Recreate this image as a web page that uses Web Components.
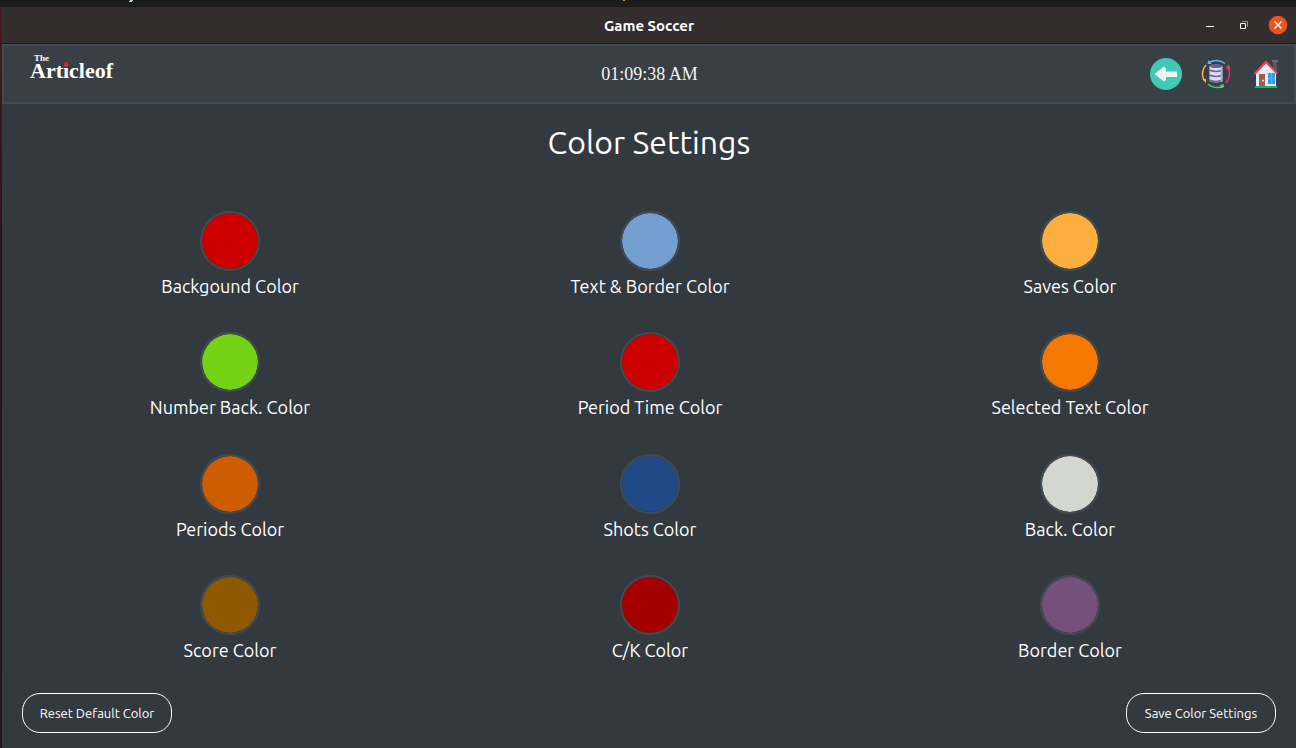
<!DOCTYPE html>
<html lang="en">
<head>
<meta charset="utf-8">
<title>Game Soccer</title>
<style>
  html, body { margin: 0; }
  body { background: #32393f; color: #fff; font-family: Ubuntu, "Noto Sans", sans-serif; }
</style>
</head>
<body>
<app-window></app-window>

<template id="window-tpl">
  <style>
    :host { display: flex; flex-direction: column; min-height: 100vh; box-sizing: border-box; background: #32393f; }
    .desktop { height: 7px; background: #1c1c1c; }
    .desktop svg { display: block; }
    .frame { flex: 1; display: flex; flex-direction: column; border-style: solid; border-image: linear-gradient(#491a1e, #2c141d 30%, #261620) 1; border-width: 0 0 0 2px; }
  </style>
  <div class="desktop">
    <svg width="640" height="3" aria-hidden="true"><path d="M130 0h3l-1 2h-3V1h1z" fill="#c9d6df"/><path d="M623 0h2v1h-2z" fill="#e0a15c"/></svg>
  </div>
  <div class="frame">
    <title-bar>Game Soccer</title-bar>
    <app-header></app-header>
    <color-settings></color-settings>
  </div>
</template>

<template id="titlebar-tpl">
  <style>
    :host { display: grid; grid-template-columns: 1fr auto 1fr; align-items: center; height: 36px; background: #312e2d; border-bottom: 1px solid #1d1c1c; font-size: 15px; line-height: 20px; font-weight: 700; padding-right: 8px; }
    .title { grid-column: 2; padding: 2px 0 0 8px; }
    .controls { display: flex; justify-content: flex-end; gap: 14px; }
    button { width: 20px; height: 20px; padding: 0; border: 0; background: none; color: #fff; }
    svg { display: block; }
  </style>
  <span class="title"><slot></slot></span>
  <div class="controls">
    <button aria-label="Minimize"><svg width="20" height="20"><path d="M6 11.500h8" stroke="#fff"/></svg></button>
    <button aria-label="Restore"><svg width="20" height="20" fill="none"><path d="M8 6.500h5.500V12" stroke="#969493"/><path d="M6.500 8.500h5v5h-5z" stroke="#fff"/></svg></button>
    <button aria-label="Close"><svg width="20" height="20"><circle cx="10" cy="10" r="9.300" fill="#e95420"/><path d="M6.500 6.500l7 7m0-7l-7 7" stroke="#fff" stroke-width="1.300"/></svg></button>
  </div>
</template>

<template id="header-tpl">
  <style>
    :host { display: grid; grid-template-columns: 1fr auto 1fr; align-items: center; height: 56px; background: #383f45; border: 2px solid #434b52; padding: 0 11px 0 26px; }
    time { font: 18px/24px "Liberation Serif", serif; color: #f4f4f4; margin-right: 14px; }
    nav { display: flex; justify-content: flex-end; gap: 16px; }
    button { width: 34px; height: 34px; padding: 0; border: 0; background: none; }
    svg { display: block; }
  </style>
  <brand-logo></brand-logo>
  <time>01:09:38 AM</time>
  <nav>
    <button aria-label="Back"><svg width="34" height="34"><circle cx="17" cy="17" r="16" fill="#40c9b4"/><path d="M5.500 17L15 9.500 17 11.500V14.500H28V20H17V23L15 24.500z" fill="#f1f3f2"/></svg></button>
    <button aria-label="Data">
      <svg width="34" height="34" fill="none" stroke-width="1.500">
        <path d="M10 5.500Q18 1 26 6.500" stroke="#60b7ff"/><path d="M8.500 7l1-4 3 4z" fill="#60b7ff"/>
        <path d="M29 11Q33 18 27 26" stroke="#e8345e"/><path d="M27 11l1-3 3 1v4z" fill="#e8345e"/>
        <path d="M25 29Q16 33 9 27" stroke="#45cf6b"/><path d="M21 28l4-1-1 4-2 0z" fill="#45cf6b"/>
        <path d="M5 23Q1 15 7 8" stroke="#ffb637"/><path d="M3 22h4v4z" fill="#ffb637"/>
        <path d="M10.500 9h13v15q-6.500 3-13 0z" fill="#dddcf5"/>
        <ellipse cx="17" cy="9" rx="6.500" ry="2" fill="#65639a"/>
        <path d="M10.500 13q6.500 3 13 0M10.500 18q6.500 3 13 0M10.500 23q6.500 3 13 0" stroke="#696793" stroke-width="1.500"/>
        <path d="M22.500 11v14" stroke="#aaa9d2"/>
      </svg>
    </button>
    <button aria-label="Home">
      <svg width="34" height="34">
        <path d="M24 4h4v11l-4-4z" fill="#60545d"/><path d="M23 3h6v2h-6z" fill="#746671"/>
        <path d="M7 15l10-10 10 10v14H7z" fill="#e4ecfa"/>
        <path d="M6 29h22v2H6z" fill="#18b260"/>
        <path d="M10 17h6v12h-6z" fill="#a45e48"/><circle cx="14" cy="23.500" r="1" fill="#eee"/>
        <path d="M19 16h7v11h-7z" fill="#2b9df4"/><path d="M22.500 16v11M19 21.500h7" stroke="#5ab4fa"/>
        <path d="M5.500 17L17 5l11.500 12" fill="none" stroke="#f03e50" stroke-width="2"/>
      </svg>
    </button>
  </nav>
</template>

<template id="logo-tpl">
  <style>
    :host { display: block; align-self: start; justify-self: start; padding-top: 7px; color: #fff; font-family: "Liberation Serif", serif; font-weight: 700; }
    .the { display: block; font-size: 9px; line-height: 10px; padding-left: 4px; }
    .name { display: block; font-size: 22px; line-height: 16px; }
    .i { position: relative; }
    .i::after { content: ""; position: absolute; left: 1px; top: 4px; width: 4px; height: 4px; border-radius: 50%; background: #ed1c24; box-shadow: 0 0 3px #7c2024; }
  </style>
  <span class="the">The</span>
  <span class="name">Art<span class="i">i</span>cleof</span>
</template>

<template id="settings-tpl">
  <style>
    :host { flex: 1; display: flex; flex-direction: column; padding: 18px 20px 15px; }
    h1 { margin: 0; font-size: 32px; line-height: 40px; font-weight: 400; text-align: center; }
    .grid { flex: 1; display: grid; grid-template-columns: repeat(3, 1fr); align-content: space-between; row-gap: 16px; margin: 49px -4px 28px -2px; }
    footer { display: flex; justify-content: space-between; }
  </style>
  <h1>Color Settings</h1>
  <div class="grid">
    <color-option value="#cc0000">Backgound Color</color-option>
    <color-option value="#729fcf">Text &amp; Border Color</color-option>
    <color-option value="#fcaf3e">Saves Color</color-option>
    <color-option value="#73d216">Number Back. Color</color-option>
    <color-option value="#cc0000">Period Time Color</color-option>
    <color-option value="#f57900">Selected Text Color</color-option>
    <color-option value="#ce5c00">Periods Color</color-option>
    <color-option value="#204a87">Shots Color</color-option>
    <color-option value="#d3d7cf">Back. Color</color-option>
    <color-option value="#8f5902">Score Color</color-option>
    <color-option value="#a40000">C/K Color</color-option>
    <color-option value="#75507b">Border Color</color-option>
  </div>
  <footer>
    <pill-button>Reset Default Color</pill-button>
    <pill-button>Save Color Settings</pill-button>
  </footer>
</template>

<template id="option-tpl">
  <style>
    :host { display: block; }
    label { display: flex; flex-direction: column; align-items: center; gap: 3px; font-size: 18px; line-height: 24px; padding-bottom: 3px; }
    input { appearance: none; box-sizing: border-box; width: 60px; height: 60px; margin: 0; padding: 0; border: 2px solid #434b52; border-radius: 50%; background: none; }
    input::-webkit-color-swatch-wrapper { padding: 0; }
    input::-webkit-color-swatch { border: 0; border-radius: 50%; }
  </style>
  <label><input type="color"><span><slot></slot></span></label>
</template>

<template id="pill-tpl">
  <style>
    :host { display: block; }
    button { box-sizing: border-box; min-width: 150px; height: 40px; padding: 0 12px; border: 1px solid #fff; border-radius: 18px; background: none; color: #fff; font-family: inherit; font-size: 13px; line-height: 20px; white-space: nowrap; }
  </style>
  <button type="button"><slot></slot></button>
</template>

<script>
  class TemplateElement extends HTMLElement {
    constructor() {
      super();
      this.attachShadow({ mode: "open" })
        .append(document.getElementById(this.constructor.template).content.cloneNode(true));
    }
  }
  class PillButton extends TemplateElement { static template = "pill-tpl"; }
  class ColorOption extends TemplateElement {
    static template = "option-tpl";
    connectedCallback() {
      this.shadowRoot.querySelector("input").value = this.getAttribute("value");
    }
  }
  class ColorSettings extends TemplateElement { static template = "settings-tpl"; }
  class BrandLogo extends TemplateElement { static template = "logo-tpl"; }
  class AppHeader extends TemplateElement { static template = "header-tpl"; }
  class TitleBar extends TemplateElement { static template = "titlebar-tpl"; }
  class AppWindow extends TemplateElement { static template = "window-tpl"; }
  customElements.define("pill-button", PillButton);
  customElements.define("color-option", ColorOption);
  customElements.define("color-settings", ColorSettings);
  customElements.define("brand-logo", BrandLogo);
  customElements.define("app-header", AppHeader);
  customElements.define("title-bar", TitleBar);
  customElements.define("app-window", AppWindow);
</script>
</body>
</html>
